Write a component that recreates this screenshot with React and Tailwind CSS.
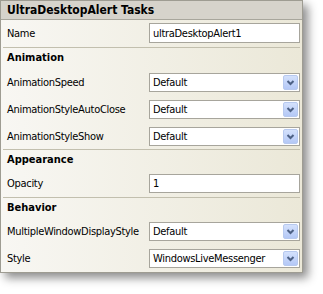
import React from 'react';

const font = { fontFamily: '"DejaVu Sans Condensed", "DejaVu Sans", sans-serif' };

// Small blue combo button, XP style
function DropButton() {
  return (
    <div className="absolute right-[1px] top-[1px] w-[15px] h-[15px] rounded-[2px] border border-[#b7c9ef] bg-gradient-to-b from-[#d4e1fc] to-[#b4c8f6] flex items-center justify-center">
      <svg width="9" height="6" viewBox="0 0 9 6">
        <polyline points="1.5,1 4.5,4 7.5,1" fill="none" stroke="#4d6185" strokeWidth="2" />
      </svg>
    </div>
  );
}

function Control({ value, combo = false, tall = false }) {
  return (
    <div
      className={`relative ${tall ? 'h-[20px]' : 'h-[19px]'} bg-white border border-[#a7a59c] flex items-center pl-[3px] text-[11px] tracking-[-0.3px] text-black`}
    >
      <span className="leading-none">{value}</span>
      {combo && <DropButton />}
    </div>
  );
}

function Row({ label, value, combo, tall }) {
  return (
    <div className="grid grid-cols-[148px_151px] items-center">
      <span className="pl-[6px] text-[11px] tracking-[-0.3px] text-black leading-none">{label}</span>
      <Control value={value} combo={combo} tall={tall} />
    </div>
  );
}

const Separator = () => <div className="mx-[2px] h-[1px] bg-[#c2bfae]" />;

function Heading({ children }) {
  return (
    <div className="h-[21px] flex items-center pl-[6px] text-[11px] font-bold text-black">
      {children}
    </div>
  );
}

export default function App() {
  return (
    <div className="w-[323px] h-[294px] bg-white" style={font}>
      <div className="w-[303px] border border-[#9e9c92] bg-gradient-to-r from-[#f8f7f3] to-[#ebe8d8] shadow-[5px_5px_9px_rgba(0,0,0,0.45)]">
        <div className="h-[19px] bg-[#d6d3cb] border-b border-[#a8a69c] flex items-center pl-[6px] text-[12px] font-bold text-black">
          UltraDesktopAlert Tasks
        </div>

        <div className="pt-[3px] pb-[4px]">
          <Row label="Name" value="ultraDesktopAlert1" tall />
        </div>
        <Separator />

        <Heading>Animation</Heading>
        <div className="flex flex-col gap-[8px] pt-[4px] pb-[3px]">
          <Row label="AnimationSpeed" value="Default" combo />
          <Row label="AnimationStyleAutoClose" value="Default" combo />
          <Row label="AnimationStyleShow" value="Default" combo />
        </div>
        <Separator />

        <Heading>Appearance</Heading>
        <div className="pt-[3px] pb-[4px]">
          <Row label="Opacity" value="1" />
        </div>
        <Separator />

        <Heading>Behavior</Heading>
        <div className="flex flex-col gap-[8px] pt-[3px] pb-[4px]">
          <Row label="MultipleWindowDisplayStyle" value="Default" combo />
          <Row label="Style" value="WindowsLiveMessenger" combo />
        </div>
      </div>
    </div>
  );
}
